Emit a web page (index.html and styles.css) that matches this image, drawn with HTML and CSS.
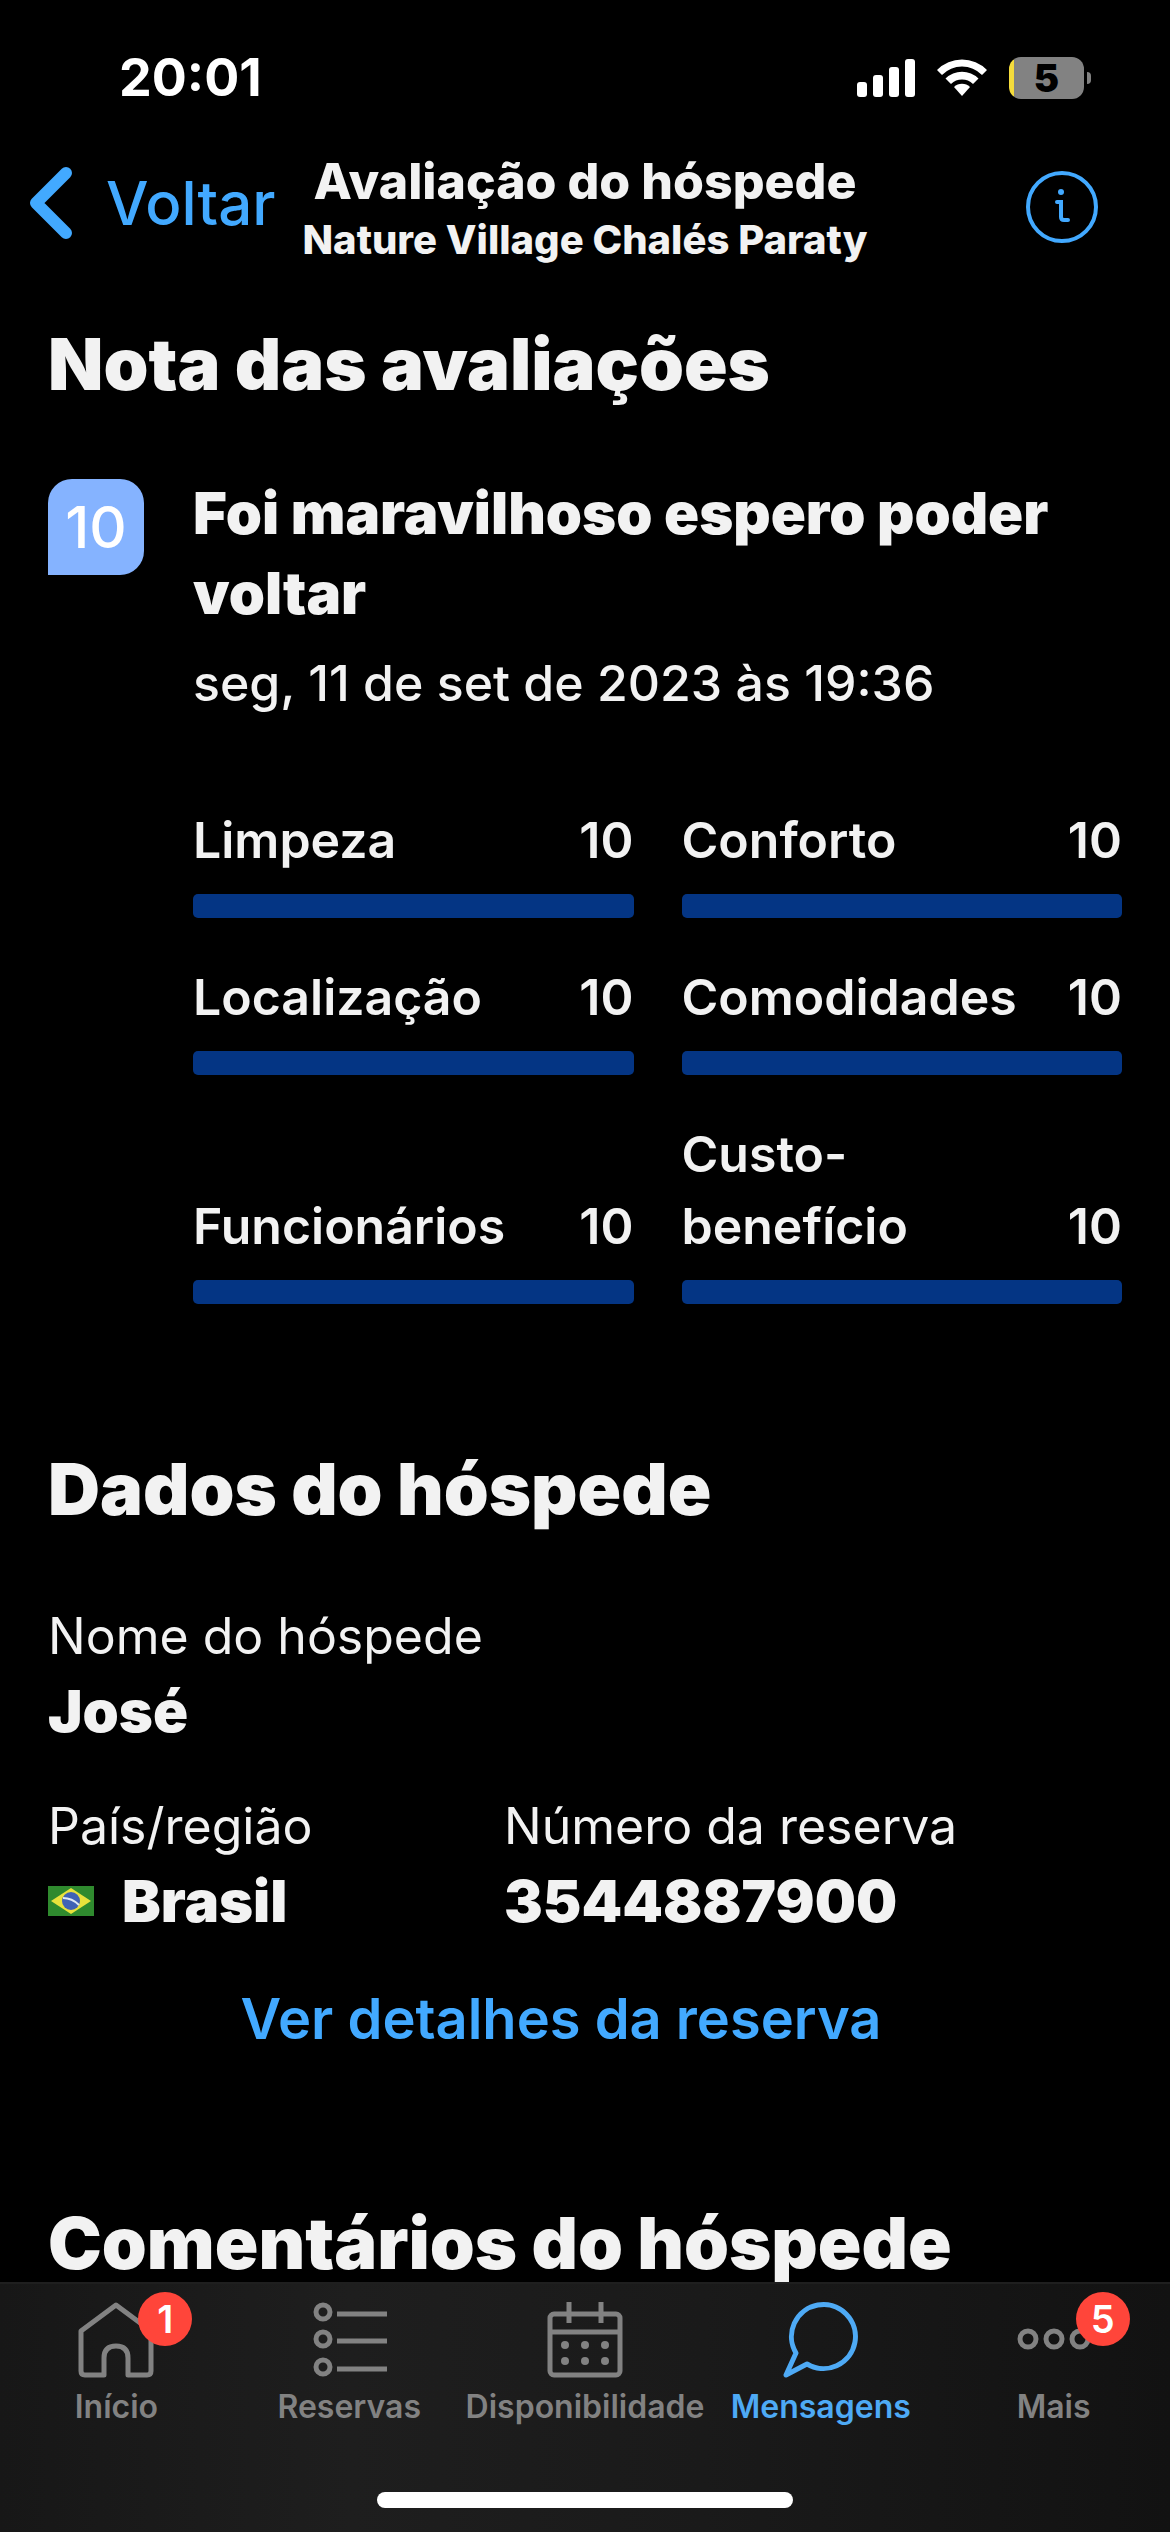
FILE: index.html
```
<!DOCTYPE html>
<html lang="pt-BR">
<head>
    <meta charset="UTF-8">
    <meta name="viewport" content="width=device-width, initial-scale=1.0">
    <title>Avaliação do hóspede</title>
    <link rel="stylesheet" href="styles.css">
</head>
<body>
    <div class="app">
        <div class="status-bar">
            <span class="time">20:01</span>
            <div class="status-icons">
                <svg class="signal" width="58" height="38" viewBox="0 0 58 38">
                    <rect x="0" y="23" width="10" height="15" rx="3"/>
                    <rect x="16" y="16" width="10" height="22" rx="3"/>
                    <rect x="32" y="8" width="10" height="30" rx="3"/>
                    <rect x="48" y="0" width="10" height="38" rx="3"/>
                </svg>
                <svg class="wifi" width="50" height="38" viewBox="0 0 50 38">
                    <path d="M0 11 A35 35 0 0 1 50 11 L45 16 A28 28 0 0 0 5 16 Z"/>
                    <path d="M8.500 19.500 A23.500 23.500 0 0 1 41.500 19.500 L36 25 A16 16 0 0 0 14 25 Z"/>
                    <path d="M17 28 A11.500 11.500 0 0 1 33 28 L25 37 Z"/>
                </svg>
                <div class="battery"><span class="battery-level">5</span></div>
            </div>
        </div>

        <header class="header">
            <button class="back" type="button">
                <svg width="46" height="74" viewBox="0 0 46 74"><path d="M38 7 L8 37 L38 67"/></svg>
                Voltar
            </button>
            <div class="header-title">
                <h1>Avaliação do hóspede</h1>
                <p>Nature Village Chalés Paraty</p>
            </div>
            <button class="info" type="button" aria-label="Informações">
                <svg width="72" height="72" viewBox="0 0 72 72">
                    <circle cx="36" cy="36" r="34"/>
                    <path d="M31 31 H35 V46 Q35 49 38 49 H42"/>
                    <circle class="dot" cx="35" cy="21" r="3"/>
                </svg>
            </button>
        </header>

        <main class="content">
            <section class="section">
                <h2>Nota das avaliações</h2>
                <div class="review">
                    <div class="score">10</div>
                    <div class="review-body">
                        <h3>Foi maravilhoso espero poder voltar</h3>
                        <p class="date">seg, 11 de set de 2023 às 19:36</p>
                        <div class="ratings">
                            <div class="rating">
                                <div class="rating-row"><span>Limpeza</span><span>10</span></div>
                                <div class="bar"><div class="fill" style="width: 100%"></div></div>
                            </div>
                            <div class="rating">
                                <div class="rating-row"><span>Conforto</span><span>10</span></div>
                                <div class="bar"><div class="fill" style="width: 100%"></div></div>
                            </div>
                            <div class="rating">
                                <div class="rating-row"><span>Localização</span><span>10</span></div>
                                <div class="bar"><div class="fill" style="width: 100%"></div></div>
                            </div>
                            <div class="rating">
                                <div class="rating-row"><span>Comodidades</span><span>10</span></div>
                                <div class="bar"><div class="fill" style="width: 100%"></div></div>
                            </div>
                            <div class="rating">
                                <div class="rating-row"><span>Funcionários</span><span>10</span></div>
                                <div class="bar"><div class="fill" style="width: 100%"></div></div>
                            </div>
                            <div class="rating">
                                <div class="rating-row"><span>Custo-benefício</span><span>10</span></div>
                                <div class="bar"><div class="fill" style="width: 100%"></div></div>
                            </div>
                        </div>
                    </div>
                </div>
            </section>

            <section class="section">
                <h2>Dados do hóspede</h2>
                <dl class="guest">
                    <div class="field wide">
                        <dt>Nome do hóspede</dt>
                        <dd>José</dd>
                    </div>
                    <div class="field">
                        <dt>País/região</dt>
                        <dd>
                            <svg class="flag" width="46" height="30" viewBox="0 0 46 30">
                                <rect width="46" height="30" fill="#2f8a2e"/>
                                <path d="M23 2 L43 15 L23 28 L3 15 Z" fill="#e8e23c"/>
                                <circle cx="23" cy="15" r="9" fill="#3f62b5"/>
                                <path d="M15 12 Q24 12 31 19" fill="none" stroke="#dfe8f5" stroke-width="2"/>
                            </svg>
                            Brasil
                        </dd>
                    </div>
                    <div class="field">
                        <dt>Número da reserva</dt>
                        <dd>3544887900</dd>
                    </div>
                </dl>
                <a class="details" href="#">Ver detalhes da reserva</a>
            </section>

            <section class="section">
                <h2>Comentários do hóspede</h2>
            </section>
        </main>

        <footer class="footer">
            <nav class="tabs">
                <a class="tab" href="#">
                    <span class="tab-icon">
                        <svg width="76" height="76" viewBox="0 0 76 76">
                            <path d="M38 3 L73 29 V69 Q73 73 69 73 H50 V56 Q50 44 38 44 Q26 44 26 56 V73 H7 Q3 73 3 69 V29 Z"/>
                        </svg>
                        <span class="badge">1</span>
                    </span>
                    Início
                </a>
                <a class="tab" href="#">
                    <span class="tab-icon">
                        <svg width="76" height="76" viewBox="0 0 76 76">
                            <circle cx="12" cy="10" r="7"/><path d="M26 12 H76"/>
                            <circle cx="12" cy="37" r="7"/><path d="M26 39 H76"/>
                            <circle cx="12" cy="65" r="7"/><path d="M26 67 H76"/>
                        </svg>
                    </span>
                    Reservas
                </a>
                <a class="tab" href="#">
                    <span class="tab-icon">
                        <svg width="76" height="76" viewBox="0 0 76 76">
                            <rect x="3" y="12" width="70" height="61" rx="4"/>
                            <path d="M3 30 H73 M22 0 V21 M54 0 V21"/>
                            <g class="dots">
                                <circle cx="18" cy="43" r="4"/><circle cx="38" cy="43" r="4"/><circle cx="58" cy="43" r="4"/>
                                <circle cx="18" cy="59" r="4"/><circle cx="38" cy="59" r="4"/><circle cx="58" cy="59" r="4"/>
                            </g>
                        </svg>
                    </span>
                    Disponibilidade
                </a>
                <a class="tab active" href="#">
                    <span class="tab-icon">
                        <svg width="76" height="76" viewBox="0 0 76 76">
                            <path d="M13 51 A32 32 0 1 1 24 62 L3 73 Z"/>
                        </svg>
                    </span>
                    Mensagens
                </a>
                <a class="tab" href="#">
                    <span class="tab-icon">
                        <svg width="76" height="76" viewBox="0 0 76 76">
                            <circle cx="12" cy="37" r="8"/><circle cx="38" cy="37" r="8"/><circle cx="64" cy="37" r="8"/>
                        </svg>
                        <span class="badge">5</span>
                    </span>
                    Mais
                </a>
            </nav>
            <div class="home-indicator"></div>
        </footer>
    </div>
</body>
</html>
```

FILE: styles.css
```
* {
    box-sizing: border-box;
}
body, h1, h2, h3, p, dl, dd {
    margin: 0;
}
body {
    background-color: #000;
    color: #f2f2f2;
    font-family: Inter, "Liberation Sans", sans-serif;
}
button {
    background: none;
    border: none;
    padding: 0;
    font-family: inherit;
    color: #42a9ff;
    cursor: pointer;
}
a {
    text-decoration: none;
}
.app {
    display: flex;
    flex-direction: column;
    min-height: 100vh;
}

/* status bar */
.status-bar {
    display: flex;
    align-items: center;
    justify-content: space-between;
    padding: 48px 79px 0 119px;
    color: #fff;
}
.time {
    font-size: 52px;
    line-height: 60px;
    font-weight: 700;
}
.status-icons {
    display: flex;
    align-items: center;
    gap: 22px;
}
.signal, .wifi {
    fill: #fff;
}
.battery {
    display: flex;
    align-items: center;
}
.battery-level {
    width: 75px;
    height: 42px;
    border-radius: 12px;
    background: linear-gradient(to right, #f5dc3c 5px, #828282 5px);
    color: #000;
    font-size: 38px;
    line-height: 42px;
    font-weight: 900;
    text-align: center;
}
.battery::after {
    content: "";
    width: 4px;
    height: 12px;
    margin-left: 3px;
    border-radius: 0 4px 4px 0;
    background-color: #828282;
}

/* header */
.header {
    display: grid;
    grid-template-columns: 1fr auto 1fr;
    align-items: center;
    padding: 40px 28px 0;
}
.back {
    display: flex;
    align-items: center;
    gap: 32px;
    padding-bottom: 8px;
    font-size: 60px;
    line-height: 74px;
    font-weight: 500;
}
.back svg {
    fill: none;
    stroke: currentColor;
    stroke-width: 12;
    stroke-linecap: round;
    stroke-linejoin: round;
}
.header-title {
    text-align: center;
}
.header-title h1 {
    font-size: 50px;
    line-height: 66px;
    font-weight: 800;
}
.header-title p {
    font-size: 40px;
    line-height: 52px;
    font-weight: 800;
}
.info {
    justify-self: end;
    height: 72px;
    margin-right: 44px;
}
.info svg {
    fill: none;
    stroke: currentColor;
    stroke-width: 4;
    stroke-linecap: round;
}
.info .dot {
    fill: currentColor;
    stroke: none;
}

/* content */
.content {
    flex: 1;
    padding: 62px 48px 0;
}
h2 {
    font-size: 72px;
    line-height: 72px;
    font-weight: 900;
}
.section {
    margin-bottom: 149px;
}
.section:last-child {
    margin-bottom: 0;
}
.review {
    display: flex;
    gap: 49px;
    margin-top: 73px;
}
.score {
    flex: none;
    width: 96px;
    height: 96px;
    margin-top: 6px;
    border-radius: 24px 24px 24px 0;
    background-color: #85b3ff;
    color: #fff;
    font-size: 58px;
    line-height: 96px;
    font-weight: 500;
    text-align: center;
}
.review-body {
    flex: 1;
}
.review-body h3 {
    font-size: 58px;
    line-height: 80px;
    font-weight: 900;
}
.date {
    margin-top: 14px;
    font-size: 50px;
    line-height: 72px;
    font-weight: 500;
}
.ratings {
    display: grid;
    grid-template-columns: 1fr 1fr;
    gap: 43px 48px;
    align-items: end;
    margin-top: 85px;
}
.rating-row {
    display: flex;
    align-items: flex-end;
    justify-content: space-between;
    gap: 40px;
    font-size: 50px;
    line-height: 72px;
    font-weight: 600;
}
.bar {
    height: 24px;
    margin-top: 18px;
    border-radius: 5px;
    overflow: hidden;
}
.fill {
    height: 100%;
    background-color: #043584;
}

/* guest data */
.guest {
    display: grid;
    grid-template-columns: 408px 1fr;
    gap: 40px 48px;
    margin-top: 75px;
}
.wide {
    grid-column: 1 / -1;
}
dt {
    font-size: 50px;
    line-height: 72px;
}
dd {
    display: flex;
    align-items: center;
    gap: 28px;
    font-size: 58px;
    line-height: 78px;
    font-weight: 900;
}
.details {
    display: block;
    margin-top: 40px;
    padding-right: 48px;
    color: #42a9ff;
    font-size: 56px;
    line-height: 78px;
    font-weight: 600;
    text-align: center;
}

/* tab bar */
.footer {
    background: linear-gradient(to right, #171717, #1e1e1e 30%, #1a1a1a 60%, #121212);
    border-top: 2px solid #1f1f1f;
    padding: 18px 0 24px;
}
.tabs {
    display: grid;
    grid-template-columns: repeat(5, 1fr);
}
.tab {
    display: flex;
    flex-direction: column;
    align-items: center;
    gap: 9px;
    color: #828282;
    font-size: 32px;
    line-height: 40px;
    font-weight: 600;
}
.tab.active {
    color: #4eaaf5;
}
.tab-icon {
    position: relative;
    height: 76px;
}
.tab-icon svg {
    fill: none;
    stroke: currentColor;
    stroke-width: 5;
    stroke-linejoin: round;
}
.tab-icon .dots {
    fill: currentColor;
    stroke: none;
}
.badge {
    position: absolute;
    top: -10px;
    left: 60px;
    width: 54px;
    height: 54px;
    border-radius: 50%;
    background-color: #ff453a;
    color: #fff;
    font-size: 38px;
    line-height: 54px;
    font-weight: 600;
    text-align: center;
}
.home-indicator {
    width: 416px;
    max-width: 60%;
    height: 16px;
    margin: 65px auto 0;
    border-radius: 8px;
    background-color: #fff;
}
```
